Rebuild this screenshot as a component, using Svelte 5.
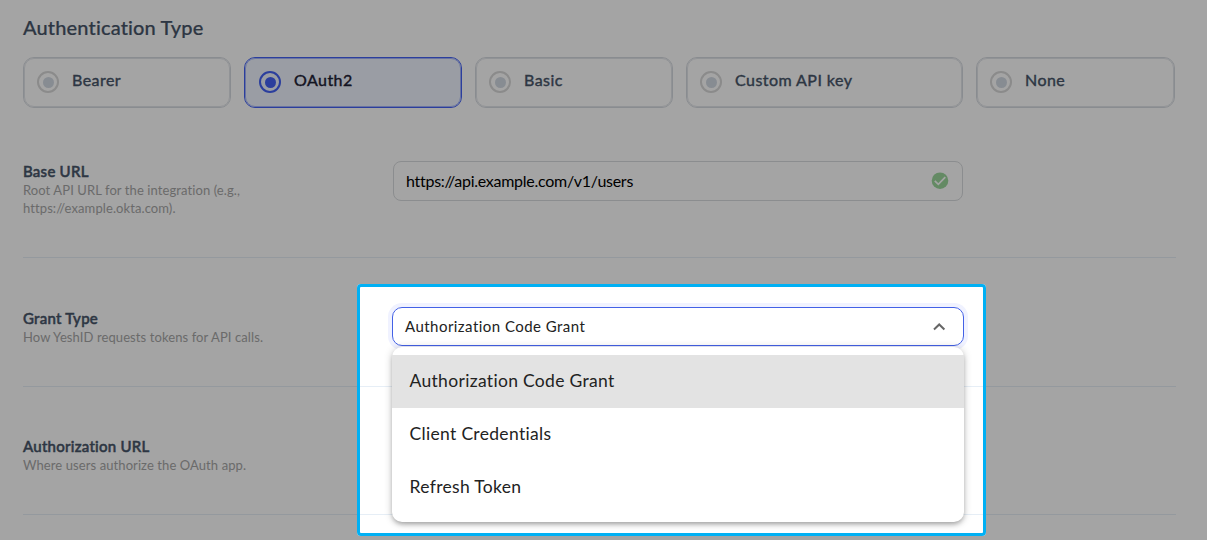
<script>
  let authType = $state('OAuth2');
  let grantType = $state('Authorization Code Grant');

  const authTypes = ['Bearer', 'OAuth2', 'Basic', 'Custom API key', 'None'];
  const grantTypes = ['Authorization Code Grant', 'Client Credentials', 'Refresh Token'];
</script>

<div class="page">
  <h2>Authentication Type</h2>

  <div class="types">
    {#each authTypes as type}
      <button class="type" class:active={authType === type} onclick={() => (authType = type)}>
        <span class="radio"></span>
        <span class="name">{type}</span>
      </button>
    {/each}
  </div>

  <div class="row base">
    <div class="info">
      <h3>Base URL</h3>
      <p>Root API URL for the integration (e.g.,<br />https://example.okta.com).</p>
    </div>
    <div class="field">
      <span class="url">https://api.example.com/v1/users</span>
      <svg width="18" height="18" viewBox="0 0 18 18">
        <circle cx="9" cy="8.7" r="8.3" fill="#9cd79c" />
        <path d="M3.8 8.9l3.5 3.4 7-7.2" fill="none" stroke="#fff" stroke-width="1.7" />
      </svg>
    </div>
  </div>

  <div class="row grant">
    <div class="info">
      <h3>Grant Type</h3>
      <p>How YeshID requests tokens for API calls.</p>
    </div>
    <div class="select">
      <span class="value">{grantType}</span>
      <svg width="14" height="10" viewBox="0 0 14 10">
        <path d="M2 7.5l5.2-5 5.2 5" fill="none" stroke="#666" stroke-width="2" />
      </svg>
      <ul class="menu">
        {#each grantTypes as grant}
          <li class:selected={grant === grantType}>
            <button onclick={() => (grantType = grant)}>{grant}</button>
          </li>
        {/each}
      </ul>
    </div>
  </div>

  <div class="row auth">
    <div class="info">
      <h3>Authorization URL</h3>
      <p>Where users authorize the OAuth app.</p>
    </div>
  </div>

  <div class="spotlight"></div>
</div>

<style>
  :global(body) {
    margin: 0;
    background: #fff;
  }

  .page {
    box-sizing: border-box;
    position: relative;
    width: 1207px;
    height: 540px;
    padding: 14px 31px 0 23px;
    overflow: hidden;
    background: #fff;
    font-family: Lato, sans-serif;
    font-variant-ligatures: none;
  }

  h2 {
    height: 43px;
    margin: 0;
    font-size: 20px;
    line-height: 26px;
    font-weight: 500;
    letter-spacing: 0.15px;
    color: #475569;
    -webkit-text-stroke: 0.2px #475569;
  }

  button {
    font-family: inherit;
    text-align: left;
  }

  .types {
    display: grid;
    grid-template-columns: 208px 218px 198px 277px 199px;
    column-gap: 13px;
    height: 51px;
  }

  .type {
    display: flex;
    align-items: center;
    gap: 13px;
    padding: 0 12px;
    border: 1.5px solid #d6dae0;
    outline: 0.5px solid #e2e5ea;
    outline-offset: -2px;
    border-radius: 11px;
    background: #fff;
    color: #475569;
  }

  .type.active {
    padding-left: 14px;
    border-color: #4361f5;
    outline-color: #a3b3fa;
    background: #eff5ff;
    color: #1e2135;
  }

  .type:not(.active) {
    padding-left: 13px;
  }

  .radio {
    flex: none;
    display: grid;
    place-items: center;
    box-sizing: border-box;
    width: 22px;
    height: 22px;
    margin-top: -1px;
    border: 2px solid #d8d8d8;
    border-radius: 50%;
  }

  .radio::after {
    content: '';
    width: 11px;
    height: 11px;
    border-radius: 50%;
    background: #d3dae4;
  }

  .active .radio {
    border-color: #4361f5;
  }

  .active .radio::after {
    background: #4361f5;
  }

  .name {
    margin-top: -5px;
    font-size: 16px;
    line-height: 20px;
    letter-spacing: 0.45px;
    -webkit-text-stroke: 0.4px currentColor;
  }

  .row {
    display: flex;
    box-sizing: border-box;
    width: 1153px;
    height: 129px;
    border-bottom: 1px solid #e6eef6;
  }

  .base {
    margin-top: 21px;
    padding-top: 32px;
  }

  .grant {
    padding-top: 49px;
  }

  .auth {
    height: 128px;
    padding-top: 49px;
  }

  .info {
    width: 370px;
  }

  h3 {
    margin: 1px 0;
    font-size: 15px;
    line-height: 18px;
    font-weight: 500;
    letter-spacing: 0.25px;
    color: #475569;
    -webkit-text-stroke: 0.5px #475569;
  }

  .grant h3 {
    margin: 2px 0 1px;
  }

  p {
    margin: 0;
    font-size: 13px;
    line-height: 18px;
    letter-spacing: 0.09px;
    color: #a6a6a6;
  }

  .field,
  .select {
    display: flex;
    align-items: center;
    justify-content: space-between;
    box-sizing: border-box;
    width: 570px;
    height: 40px;
    padding: 0 13px 0 12px;
    border: 1px solid #d9dbde;
    border-radius: 8px;
    font-size: 16px;
    color: #000;
  }

  .url {
    margin-top: -2px;
    letter-spacing: -0.27px;
  }

  .select {
    position: relative;
    width: 572px;
    height: 39px;
    margin-left: -1px;
    padding-right: 17px;
    border-color: #4361e6;
    border-radius: 10px;
    box-shadow: 0 0 0 4px #f0f2ff;
    font-size: 15px;
    color: #222;
  }

  .value {
    margin-top: -2px;
    letter-spacing: 0.46px;
  }

  .menu {
    position: absolute;
    top: 39px;
    left: -1px;
    right: -1px;
    box-sizing: border-box;
    height: 175px;
    margin: 0;
    padding: 8px 0;
    border-radius: 10px;
    background: #fff;
    list-style: none;
    box-shadow:
      0 3px 5px -1px rgba(0, 0, 0, 0.28),
      0 1px 9px rgba(0, 0, 0, 0.2);
  }

  .menu button {
    display: block;
    width: 100%;
    height: 53px;
    padding: 0 17.5px 2px;
    border: 0;
    background: none;
    font-size: 17.5px;
    letter-spacing: 0.32px;
    color: #222;
  }

  .selected {
    background: #e3e3e3;
  }

  /* highlight frame that dims everything outside it */
  .spotlight {
    position: absolute;
    top: 283.5px;
    left: 357px;
    box-sizing: border-box;
    width: 628.5px;
    height: 252px;
    border: 3px solid #00b0f4;
    border-radius: 4px;
    box-shadow: 0 0 0 1300px rgba(0, 0, 0, 0.357);
    pointer-events: none;
  }
</style>
